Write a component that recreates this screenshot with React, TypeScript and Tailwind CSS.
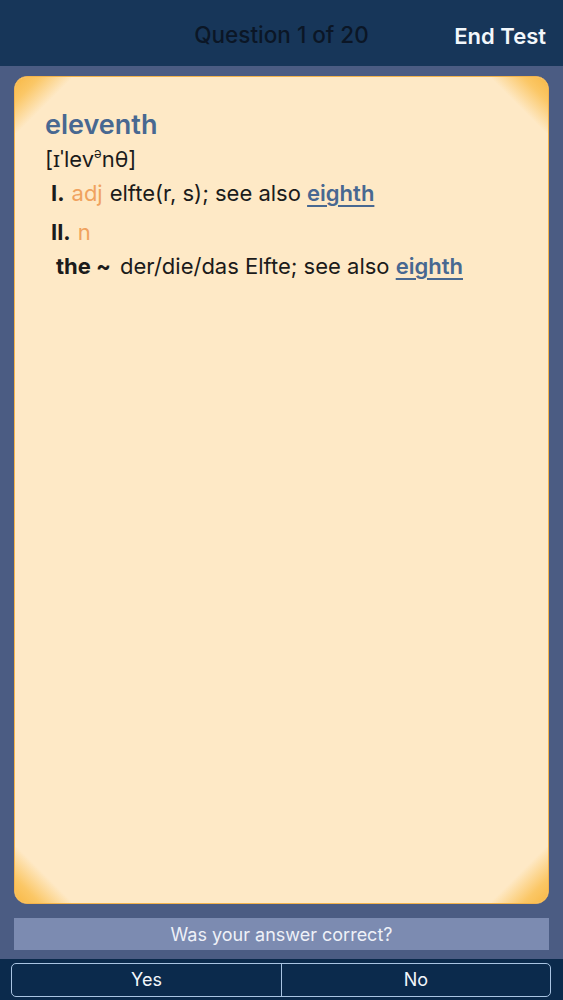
import React from "react";

const font = { fontFamily: "Inter, 'Noto Sans', 'DejaVu Sans', sans-serif" };

function Corner({ pos }: { pos: "tl" | "tr" | "bl" | "br" }) {
  const cls = {
    tl: "top-0 left-0 bg-[linear-gradient(135deg,#f8b845_0%,#fbc766_22%,rgba(254,233,198,0)_52%)]",
    tr: "top-0 right-0 bg-[linear-gradient(225deg,#f8b845_0%,#fbc766_22%,rgba(254,233,198,0)_52%)]",
    bl: "bottom-0 left-0 bg-[linear-gradient(45deg,#f8b845_0%,#fbc766_22%,rgba(254,233,198,0)_52%)]",
    br: "bottom-0 right-0 bg-[linear-gradient(315deg,#f8b845_0%,#fbc766_22%,rgba(254,233,198,0)_52%)]",
  }[pos];
  return <div className={`pointer-events-none absolute h-[56px] w-[56px] ${cls}`} />;
}

export default function App() {
  return (
    <div className="flex h-[1000px] w-[563px] flex-col overflow-hidden bg-[#4b5c83]" style={font}>
      <header className="relative flex h-[66px] items-center justify-center bg-[#173659] pt-[4px]">
        <span className="text-[22.5px] font-medium text-[#0b1626]">Question 1 of 20</span>
        <button className="absolute right-[17px] top-[20px] text-[22px] font-semibold text-[#f2f7fb]">End Test</button>
      </header>

      <main className="flex flex-1 flex-col px-[14px] pt-[10px]">
        <div className="relative h-[828px] overflow-hidden rounded-[13px] border-[1.5px] border-[#f3b34c] bg-[#fee9c6]">
          <Corner pos="tl" />
          <Corner pos="tr" />
          <Corner pos="bl" />
          <Corner pos="br" />
          <div className="relative pl-[30px] pt-[31px] text-[22px] text-[#1b1b1b]">
            <div className="flex h-[34px] items-center text-[27px] font-semibold text-[#486891]">eleventh</div>
            <div className="flex h-[34px] items-center text-[22px]">
              [ɪˈlev<sup className="text-[13px]">ə</sup>nθ]
            </div>
            <div className="ml-[6px] flex h-[34px] items-center gap-[7px]">
              <span className="font-bold">I.</span>
              <span className="text-[#f0a25e]">adj</span>
              <span>
                elfte(r, s); see also{" "}
                <span className="font-semibold text-[#486891] underline decoration-[1.5px] underline-offset-[4px]">eighth</span>
              </span>
            </div>
            <div className="ml-[6px] mt-[5px] flex h-[34px] items-center gap-[7px]">
              <span className="font-bold">II.</span>
              <span className="text-[#f0a25e]">n</span>
            </div>
            <div className="ml-[11px] flex h-[34px] items-center gap-[9px]">
              <span className="font-bold">the ~</span>
              <span>
                der/die/das Elfte; see also{" "}
                <span className="font-semibold text-[#486891] underline decoration-[1.5px] underline-offset-[4px]">eighth</span>
              </span>
            </div>
          </div>
        </div>

        <div className="mt-[14px] flex h-[32px] items-center justify-center bg-[#7c8bb1] text-[18px] text-[#eef1f8]">
          Was your answer correct?
        </div>
      </main>

      <footer className="mt-[9px] flex h-[41px] items-center bg-[#0b2a4c] pl-[11px] pr-[12px]">
        <div className="flex h-[34px] w-full overflow-hidden rounded-[5px] border border-[#a9c4e2]">
          <button className="flex w-[270px] items-center justify-center border-r border-[#a9c4e2] text-[18px] text-[#f2f6fb]">
            Yes
          </button>
          <button className="flex flex-1 items-center justify-center text-[18px] text-[#f2f6fb]">No</button>
        </div>
      </footer>
    </div>
  );
}
